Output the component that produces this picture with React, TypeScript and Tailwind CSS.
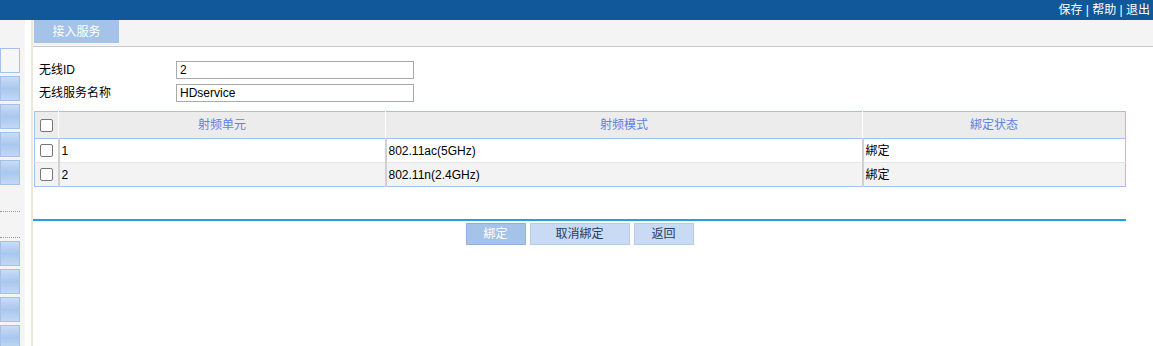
const font = "font-['Liberation_Sans','Noto_Sans_CJK_SC',sans-serif]";

function SideBox({ plain }: { plain?: boolean }) {
  return (
    <div
      className={
        "h-[25px] w-[20px] shrink-0 border border-[#a3c1ea] " +
        (plain
          ? "bg-[#f6f6f6]"
          : "bg-gradient-to-b from-[#cadcf6] via-[#a9c7ee] to-[#c3d8f4]")
      }
    />
  );
}

function Check() {
  return (
    <span className="block h-[13px] w-[13px] rounded-[2px] border border-[#777] bg-white" />
  );
}

const rows = [
  { unit: "1", mode: "802.11ac(5GHz)", status: "綁定" },
  { unit: "2", mode: "802.11n(2.4GHz)", status: "綁定" },
];

export default function App() {
  return (
    <div className={`flex h-[346px] w-[1153px] flex-col overflow-hidden bg-white text-[12px] text-black ${font}`}>
      <div className="flex h-[20px] shrink-0 items-center justify-end bg-[#11589a] pr-[3px] text-[12px] text-white">
        保存 | 帮助 | 退出
      </div>

      <div className="flex min-h-0 flex-1 overflow-hidden">
        <div className="w-[25px] shrink-0 bg-[#f4f4f4] pt-[28px]">
          <div className="flex flex-col gap-[3px]">
            <SideBox plain />
            <SideBox />
            <SideBox />
            <SideBox />
            <SideBox />
          </div>
          <div className="mt-[26px] h-[27px] w-[20px] border-y border-dotted border-[#999]" />
          <div className="mt-[3px] flex flex-col gap-[3px]">
            <SideBox />
            <SideBox />
            <SideBox />
            <SideBox />
          </div>
        </div>
        <div className="w-[6px] shrink-0" />
        <div className="w-[2px] shrink-0 bg-[#ebe8d9]" />

        <div className="flex flex-1 flex-col">
          <div className="h-[27px] shrink-0 border-b border-[#c8c8c8] bg-[#f4f4f4]">
            <div className="ml-[1px] flex h-[23px] w-[85px] items-center justify-center bg-[#a5c2e8] text-white">
              接入服务
            </div>
          </div>

          <div className="mr-[27px] flex flex-col">
            <div className="flex flex-col gap-[5px] pl-[6px] pt-[14px]">
              <div className="flex items-center">
                <span className="w-[137px]">无线ID</span>
                <div className="flex h-[18px] w-[238px] items-center border border-[#a9a9a9] pl-[3px]">2</div>
              </div>
              <div className="flex items-center">
                <span className="w-[137px]">无线服务名称</span>
                <div className="flex h-[18px] w-[238px] items-center border border-[#a9a9a9] pl-[3px]">HDservice</div>
              </div>
            </div>

            <table className="ml-[1px] mt-[9px] w-[1092px] table-fixed border-collapse border border-[#a3c1ea]">
              <colgroup>
                <col className="w-[24px]" />
                <col className="w-[327px]" />
                <col className="w-[477px]" />
                <col />
              </colgroup>
              <thead>
                <tr className="h-[27px] border-b border-[#a3c1ea] bg-[#ececec] text-[#5f7fe6]">
                  <th className="border-r border-white pl-[5px] font-normal">
                    <Check />
                  </th>
                  <th className="border-r border-white font-normal">射频单元</th>
                  <th className="border-r border-white font-normal">射频模式</th>
                  <th className="font-normal">綁定状态</th>
                </tr>
              </thead>
              <tbody>
                {rows.map((r, i) => (
                  <tr
                    key={r.unit}
                    className={
                      "h-[24px] " +
                      (i === 0 ? "border-b border-[#e6e6e6] bg-white" : "bg-[#f3f3f3]")
                    }
                  >
                    <td className="border-r-2 border-[#d0d0d0] pl-[5px]">
                      <Check />
                    </td>
                    <td className="border-r-2 border-[#d0d0d0] pl-[2px]">{r.unit}</td>
                    <td className="border-r-2 border-[#d0d0d0] pl-[2px]">{r.mode}</td>
                    <td className="pl-[2px]">{r.status}</td>
                  </tr>
                ))}
              </tbody>
            </table>

            <div className="mt-[32px] h-[2px] bg-[#2a9ddc]" />

            <div className="mt-[2px] flex justify-center gap-[4px]">
              <button className="h-[22px] w-[60px] border border-[#8fb1e0] bg-[#a5c2e8] text-white">
                綁定
              </button>
              <button className="h-[22px] w-[100px] border border-[#b6cce9] bg-[#c8daf4] text-[#2b3a5c]">
                取消綁定
              </button>
              <button className="h-[22px] w-[60px] border border-[#b6cce9] bg-[#c8daf4] text-[#2b3a5c]">
                返回
              </button>
            </div>
          </div>
        </div>
      </div>
    </div>
  );
}
